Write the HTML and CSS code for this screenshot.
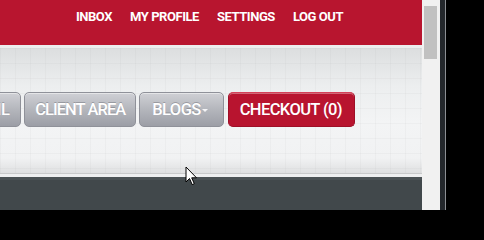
FILE: index.html
```html
<!DOCTYPE html>
<html>
<head>
<meta charset="utf-8">
<link rel="stylesheet" href="styles.css">
</head>
<body>
<div class="window">
  <div class="page">
    <header class="topbar">
      <nav class="usernav">
        <a class="usernav-item">INBOX</a>
        <a class="usernav-item">MY PROFILE</a>
        <a class="usernav-item">SETTINGS</a>
        <a class="usernav-item">LOG OUT</a>
      </nav>
    </header>
    <div class="topbar-edge"></div>
    <section class="menuband">
      <div class="menu">
        <a class="btn btn-grey">EMAIL</a>
        <a class="btn btn-grey btn-tight">CLIENT AREA</a>
        <a class="btn btn-grey btn-drop">BLOGS<span class="caret"></span></a>
        <a class="btn btn-red">CHECKOUT (0)</a>
      </div>
    </section>
    <div class="menuband-line"></div>
    <div class="menuband-gap"></div>
    <footer class="darkband">
      <div class="darkband-top"></div>
    </footer>
    <svg class="cursor" width="13" height="20" viewBox="0 0 13 20">
      <path d="M1 1 L1 16 L4.5 12.5 L7.2 18.6 L9.3 17.7 L6.7 11.8 L11.5 11.8 Z" fill="#fff" stroke="#000" stroke-width="1" stroke-linejoin="round"/>
    </svg>
  </div>
  <div class="scrollbar"><div class="thumb"></div></div>
  <div class="frame"></div>
  <div class="outside"></div>
</div>
</body>
</html>
```

FILE: styles.css
```css
html, body {
  margin: 0;
  padding: 0;
  background: #000;
}
.window {
  display: flex;
  width: 484px;
  height: 210px;
  overflow: hidden;
}
.page {
  position: relative;
  width: 422px;
  flex: 0 0 422px;
  display: flex;
  flex-direction: column;
  overflow: hidden;
  font-family: Roboto, "Liberation Sans", sans-serif;
}
.topbar {
  height: 45px;
  flex: 0 0 45px;
  background: #b8152f;
  display: flex;
  justify-content: flex-end;
  padding-right: 79px;
}
.usernav {
  display: flex;
  gap: 18px;
  padding-top: 10px;
}
.usernav-item {
  color: #fff;
  font-weight: bold;
  font-size: 13px;
  line-height: 14px;
  letter-spacing: -0.45px;
}
.topbar-edge {
  height: 3px;
  flex: 0 0 3px;
  background: #ecedee;
}
.menuband {
  height: 125px;
  flex: 0 0 125px;
  background-color: #eef0f1;
  background-image:
    linear-gradient(to right, rgba(0,0,0,0.025) 1px, transparent 1px),
    linear-gradient(to bottom, rgba(0,0,0,0.025) 1px, transparent 1px),
    linear-gradient(to bottom, #dcdedf 0%, #eceeef 30%, #f3f4f5 60%, #f1f2f3 88%, #dfe0e1 100%);
  background-size: 15px 15px, 15px 15px, 100% 100%;
  display: flex;
  justify-content: flex-end;
  padding-right: 67px;
  overflow: hidden;
}
.menu {
  display: flex;
  gap: 3px;
  padding-top: 44px;
  height: 35px;
}
.btn {
  box-sizing: border-box;
  height: 35px;
  display: flex;
  align-items: center;
  padding: 0 11px;
  border-radius: 5px;
  font-size: 16.5px;
  font-weight: 500;
  letter-spacing: -0.6px;
  color: #fff;
  white-space: nowrap;
  flex: 0 0 auto;
}
.btn-grey {
  border: 1px solid #8f9199;
  background: linear-gradient(to bottom, #cfd0d5 0%, #b4b6bc 50%, #9c9ea6 100%);
  box-shadow: inset 0 1px 0 rgba(255,255,255,0.45);
  text-shadow: 0 -1px 0 rgba(80,82,90,0.35);
}
.btn-tight {
  letter-spacing: -0.95px;
  padding: 0 10px;
}
.btn-drop {
  padding: 0 15px 0 12px;
}
.btn-red {
  margin-left: 1px;
  border: 1px solid #9e0f27;
  border-top-color: #d44058;
  background: #b8142f;
  box-shadow: inset 0 1px 0 rgba(255,255,255,0.35);
  padding: 0 12px 0 11px;
}
.caret {
  display: inline-block;
  width: 0;
  height: 0;
  margin-left: 1px;
  margin-top: 1px;
  border-left: 3px solid transparent;
  border-right: 3px solid transparent;
  border-top: 3px solid #f4f4f6;
}
.menuband-line {
  height: 1px;
  flex: 0 0 1px;
  background: #c9cacb;
}
.menuband-gap {
  height: 3px;
  flex: 0 0 3px;
  background: #eeeff0;
}
.darkband {
  flex: 1 1 auto;
  background: #41484b;
}
.darkband-top {
  height: 3px;
  background: #4b5255;
}
.cursor {
  position: absolute;
  left: 185px;
  top: 166px;
}
.scrollbar {
  flex: 0 0 18px;
  background: #f1f1f1;
}
.thumb {
  margin: 6px 0 0 2px;
  width: 13px;
  height: 53px;
  background: #c1c1c1;
}
.frame {
  flex: 0 0 5px;
  background: #23272b;
  border-right: 1px solid #8b8e92;
}
.outside {
  flex: 1 1 auto;
  background: #000;
}
```
